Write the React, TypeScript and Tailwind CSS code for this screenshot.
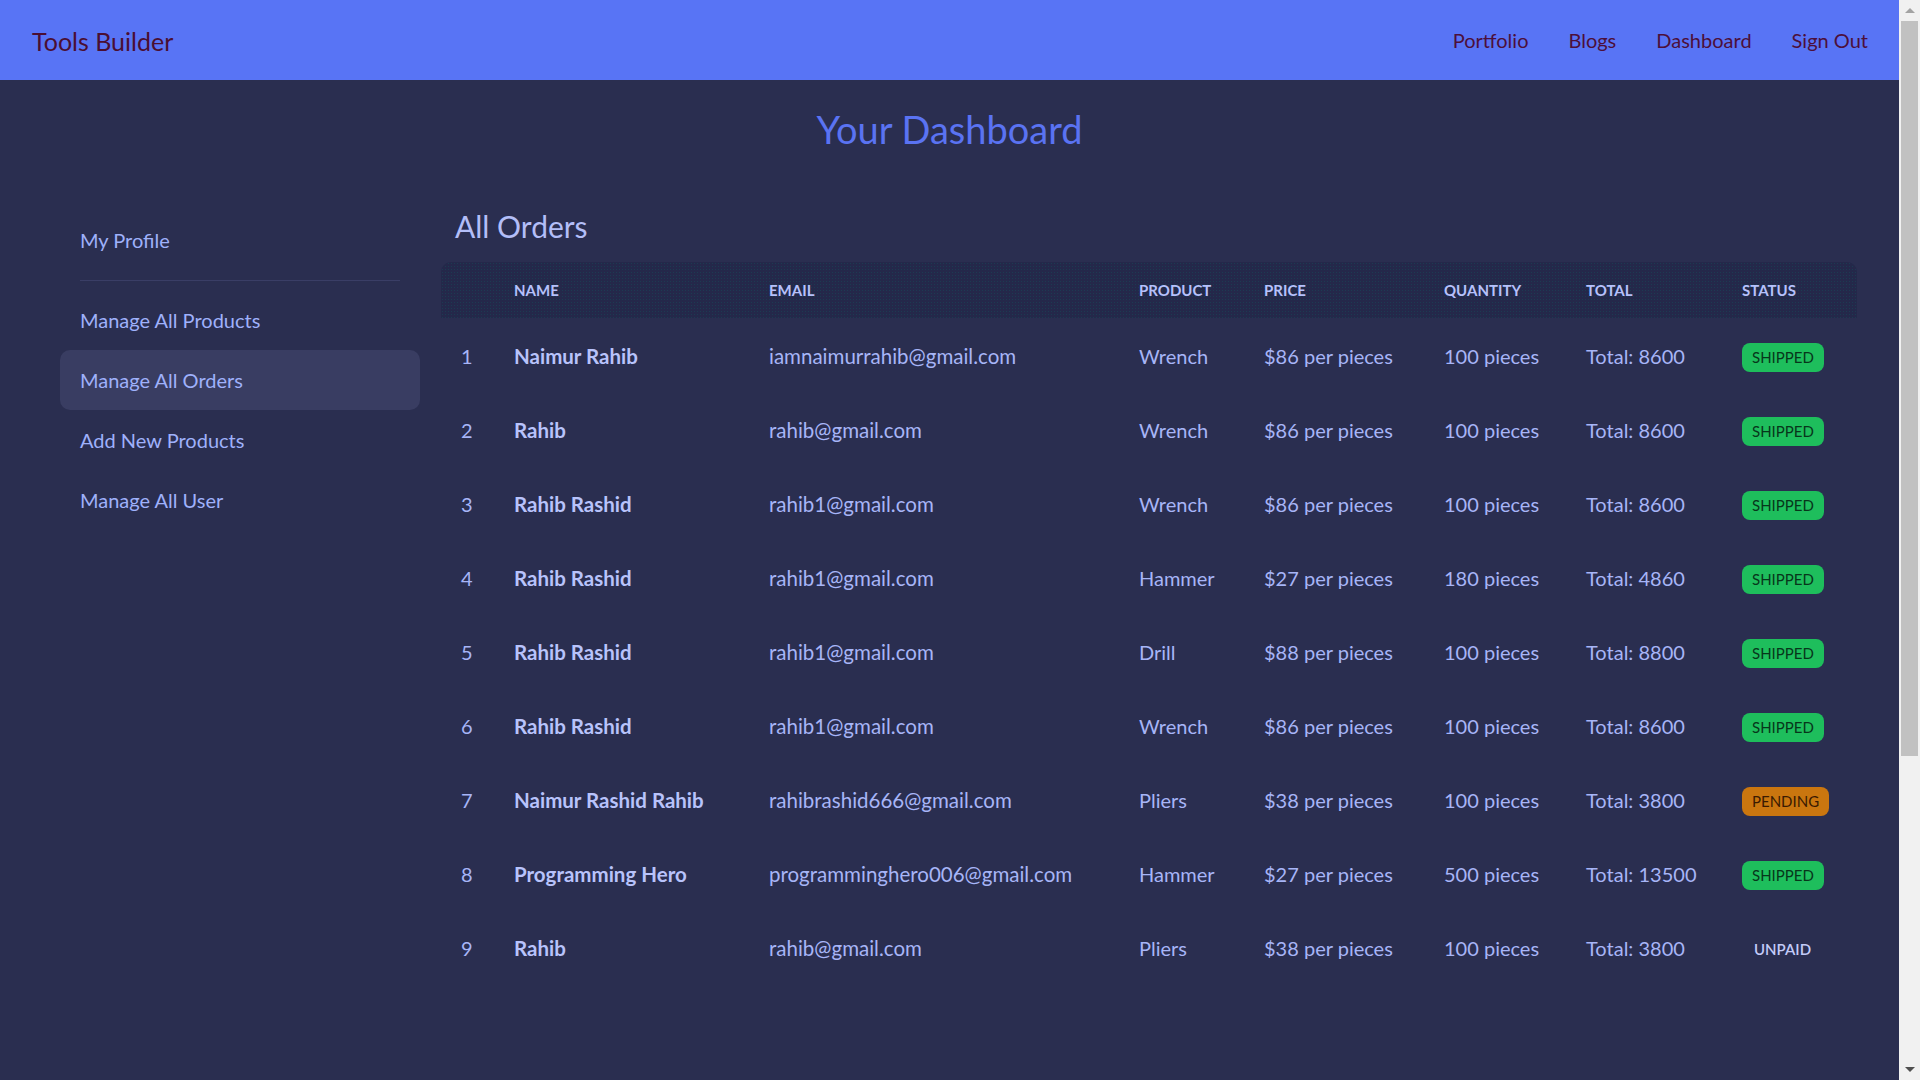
import React from 'react';

const orders = [
  { name: 'Naimur Rahib', email: 'iamnaimurrahib@gmail.com', product: 'Wrench', price: 86, qty: 100, status: 'shipped' },
  { name: 'Rahib', email: 'rahib@gmail.com', product: 'Wrench', price: 86, qty: 100, status: 'shipped' },
  { name: 'Rahib Rashid', email: 'rahib1@gmail.com', product: 'Wrench', price: 86, qty: 100, status: 'shipped' },
  { name: 'Rahib Rashid', email: 'rahib1@gmail.com', product: 'Hammer', price: 27, qty: 180, status: 'shipped' },
  { name: 'Rahib Rashid', email: 'rahib1@gmail.com', product: 'Drill', price: 88, qty: 100, status: 'shipped' },
  { name: 'Rahib Rashid', email: 'rahib1@gmail.com', product: 'Wrench', price: 86, qty: 100, status: 'shipped' },
  { name: 'Naimur Rashid Rahib', email: 'rahibrashid666@gmail.com', product: 'Pliers', price: 38, qty: 100, status: 'pending' },
  { name: 'Programming Hero', email: 'programminghero006@gmail.com', product: 'Hammer', price: 27, qty: 500, status: 'shipped' },
  { name: 'Rahib', email: 'rahib@gmail.com', product: 'Pliers', price: 38, qty: 100, status: 'unpaid' },
];

const menu = ['Manage All Products', 'Manage All Orders', 'Add New Products', 'Manage All User'];

const StatusBadge = ({ status }: { status: string }) => {
  if (status === 'shipped') {
    return (
      <span className="inline-flex items-center h-[29px] px-[10px] rounded-[8px] bg-[#1ebe5c] text-[#07361b] text-[15px]">
        SHIPPED
      </span>
    );
  }
  if (status === 'pending') {
    return (
      <span className="inline-flex items-center h-[29px] px-[10px] rounded-[8px] bg-[#ca760f] text-[#3a1a02] text-[15px]">
        PENDING
      </span>
    );
  }
  return (
    <span className="inline-flex items-center h-[29px] px-[12px] text-[#c3cbf8] text-[15px] font-semibold">UNPAID</span>
  );
};

const App: React.FC = () => {
  return (
    <div
      className="flex h-screen overflow-hidden"
      style={{ fontFamily: 'Lato, "Open Sans", "Noto Sans", sans-serif' }}
    >
      <div className="flex-1 min-w-0 bg-[#2a2e50]">
        {/* navbar */}
        <header className="h-[80px] bg-[#5874f5] flex items-center justify-between pl-[32px] pr-[11px]">
          <span className="pt-[4px] text-[25px] text-[#4a0e32]">Tools Builder</span>
          <nav className="flex items-center text-[20px] text-[#4c0f3a]">
            {['Portfolio', 'Blogs', 'Dashboard', 'Sign Out'].map((item) => (
              <a key={item} className="px-[20px] h-[48px] flex items-center">
                {item}
              </a>
            ))}
          </nav>
        </header>

        <h1 className="mt-[26px] text-center text-[38px] leading-[46px] text-[#5a73f2]">Your Dashboard</h1>

        <div className="flex mt-[56px]">
          {/* sidebar */}
          <aside className="w-[441px] shrink-0 pl-[60px] pt-[2px]">
            <ul className="w-[360px] text-[20px] text-[#9fb1fb]">
              <li className="h-[60px] flex items-center px-[20px]">My Profile</li>
              <li className="h-[20px] flex items-center px-[20px]">
                <div className="h-px w-full bg-[#3a3e66]"></div>
              </li>
              {menu.map((item) => (
                <li
                  key={item}
                  className={`h-[60px] flex items-center px-[20px] rounded-[10px] ${
                    item === 'Manage All Orders' ? 'bg-[#393d62]' : ''
                  }`}
                >
                  {item}
                </li>
              ))}
            </ul>
          </aside>

          {/* orders */}
          <main className="flex-1 min-w-0">
            <h2 className="pl-[14px] text-[30px] leading-[36px] text-[#b3bef8]">All Orders</h2>
            <table className="mt-[18px] w-[1416px] table-fixed border-collapse text-left">
              <colgroup>
                <col className="w-[53px]" />
                <col className="w-[255px]" />
                <col className="w-[370px]" />
                <col className="w-[125px]" />
                <col className="w-[180px]" />
                <col className="w-[142px]" />
                <col className="w-[156px]" />
                <col className="w-[135px]" />
              </colgroup>
              <thead>
                <tr className="h-[56px] bg-[#24284a] bg-[radial-gradient(#1c3b52_0.7px,transparent_0.9px)] bg-[size:3px_3px] text-[15px] font-bold text-[#b6c1fb]">
                  <th className="rounded-tl-[10px] pl-[20px]"></th>
                  <th className="pl-[20px]">NAME</th>
                  <th className="pl-[20px]">EMAIL</th>
                  <th className="pl-[20px]">PRODUCT</th>
                  <th className="pl-[20px]">PRICE</th>
                  <th className="pl-[20px]">QUANTITY</th>
                  <th className="pl-[20px]">TOTAL</th>
                  <th className="rounded-tr-[10px] pl-[20px]">STATUS</th>
                </tr>
              </thead>
              <tbody className="text-[20px] text-[#a7b5f7]">
                {orders.map((o, i) => (
                  <tr key={i} className="h-[74px]">
                    <td className="pl-[20px] pt-[2px]">{i + 1}</td>
                    <td className="pl-[20px] pt-[2px] text-[20.5px] font-bold text-[#b8c3fb] whitespace-nowrap">{o.name}</td>
                    <td className="pl-[20px] pt-[2px] text-[20.5px] whitespace-nowrap">{o.email}</td>
                    <td className="pl-[20px] pt-[2px]">{o.product}</td>
                    <td className="pl-[20px] pt-[2px] whitespace-nowrap">${o.price} per pieces</td>
                    <td className="pl-[20px] pt-[2px] whitespace-nowrap">{o.qty} pieces</td>
                    <td className="pl-[20px] pt-[2px] whitespace-nowrap">Total: {o.price * o.qty}</td>
                    <td className="pl-[20px] pt-[2px]">
                      <StatusBadge status={o.status} />
                    </td>
                  </tr>
                ))}
              </tbody>
            </table>
          </main>
        </div>
      </div>

      {/* window scrollbar */}
      <div className="w-[21px] shrink-0 bg-[#f1f1f1] flex flex-col items-center">
        <div className="h-[21px] flex items-center justify-center">
          <div className="w-0 h-0 border-l-[5px] border-r-[5px] border-b-[5px] border-l-transparent border-r-transparent border-b-[#a3a3a3]"></div>
        </div>
        <div className="w-[17px] h-[735px] bg-[#c1c1c1]"></div>
        <div className="flex-1"></div>
        <div className="h-[21px] flex items-center justify-center">
          <div className="w-0 h-0 border-l-[5px] border-r-[5px] border-t-[5px] border-l-transparent border-r-transparent border-t-[#505050]"></div>
        </div>
      </div>
    </div>
  );
};

export default App;
